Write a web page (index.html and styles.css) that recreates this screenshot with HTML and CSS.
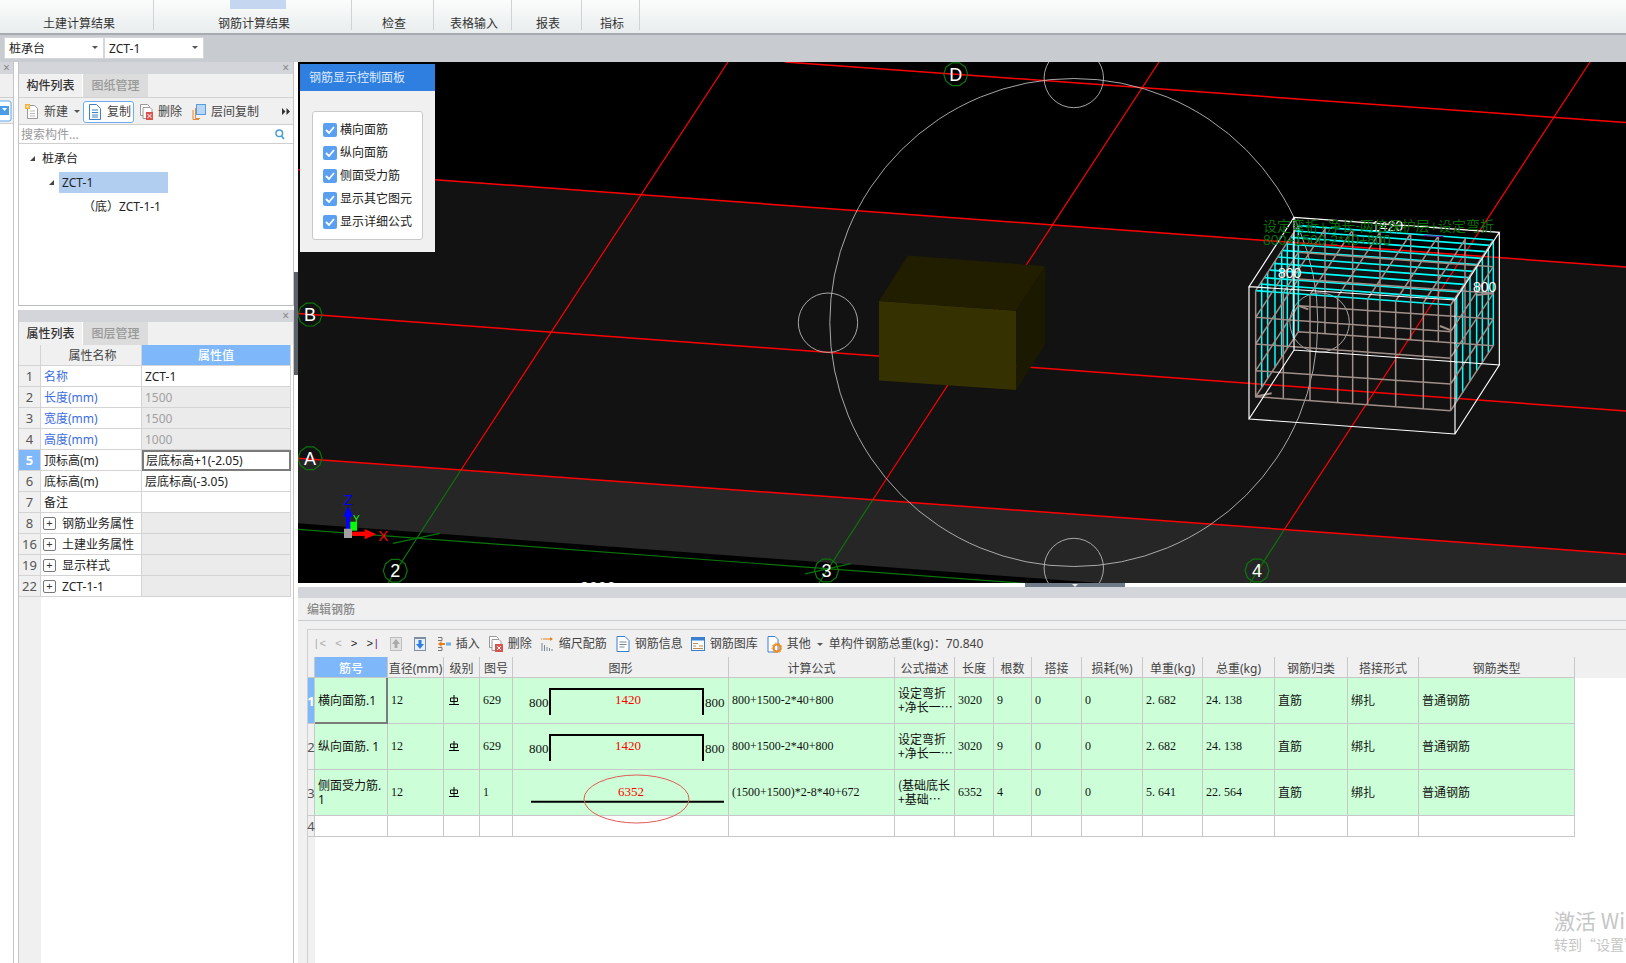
FILE: index.html
```html
<!DOCTYPE html>
<html lang="zh-CN">
<head>
<meta charset="utf-8">
<title>钢筋计算结果</title>
<link rel="stylesheet" href="styles.css">
</head>
<body>
<div class="app">
  <header class="ribbon">
    <div class="rb-group g1"><span>土建计算结果</span></div>
    <div class="rb-group g2"><i class="rb-mark"></i><span>钢筋计算结果</span></div>
    <div class="rb-group g3"><span>检查</span></div>
    <div class="rb-group g4"><span>表格输入</span></div>
    <div class="rb-group g5"><span>报表</span></div>
    <div class="rb-group g6"><span>指标</span></div>
  </header>
  <div class="combo-bar">
    <div class="combo">桩承台<i class="caret"></i></div>
    <div class="combo">ZCT-1<i class="caret"></i></div>
  </div>
  <main class="main">
    <aside class="rail">
      <div class="rail-head">×</div>
      <div class="rail-tabs"></div>
      <div class="rail-tool">
        <svg width="12" height="22" viewBox="0 0 12 22"><rect x="-6" y="1" width="17" height="20" rx="2" fill="#fff" stroke="#5ba6ee"/><rect x="-4" y="6" width="13" height="9" fill="#4a9be8"/><path d="M2 8h5l-2.500 3z" fill="#fff"/></svg>
      </div>
    </aside>
    <section class="left">
      <div class="panel comp">
        <div class="pn-head">×</div>
        <div class="tabs"><div class="tab on">构件列表</div><div class="tab">图纸管理</div></div>
        <div class="ptool">
          <span class="tool"><svg width="14" height="16" viewBox="0 0 14 16"><path d="M2.500 1.500h7l3 3v10h-10z" fill="#fff" stroke="#999"/><path d="M5 7h5M5 9.500h5M5 12h5" stroke="#bbb"/><rect x="0" y="0" width="5" height="5" fill="#f2b23c"/><rect x="1.500" y="1.500" width="2" height="2" fill="#fff3c8"/></svg>新建</span>
          <i class="caret tcaret"></i>
          <span class="tool tool-on"><svg width="12" height="16" viewBox="0 0 12 16"><path d="M.5 .5h7l4 4v11H.5z" fill="#fff" stroke="#3f7fc8"/><path d="M3 6h6M3 8.500h6M3 11h6M3 13h6" stroke="#3f7fc8"/></svg>复制</span>
          <span class="tool t-del"><svg width="13" height="16" viewBox="0 0 13 16"><path d="M.5 .5h7l2 2v9H.5z" fill="#fff" stroke="#999"/><path d="M3 3.500h7l2 2v9H3z" fill="#fff" stroke="#999"/><rect x="6" y="8" width="7" height="8" fill="#d9534f"/><path d="M7.500 10l4 4M11.500 10l-4 4" stroke="#fff"/></svg>删除</span>
          <span class="tool t-floor"><svg width="14" height="16" viewBox="0 0 14 16"><path d="M3.500 4v10.500H8M1 6v9.500h6" fill="none" stroke="#e08a3c"/><rect x="4.500" y=".5" width="9" height="10" fill="#b9d6f6" stroke="#5a9be0"/></svg>层间复制</span>
          <span class="more">
            <svg width="8" height="7" viewBox="0 0 8 7"><path d="M0 0l3.500 3.500L0 7zM4.500 0L8 3.500 4.500 7z" fill="#333"/></svg>
          </span>
        </div>
        <div class="psearch"><span>搜索构件...</span>
          <svg width="10" height="11" viewBox="0 0 10 11"><circle cx="4.300" cy="4.300" r="3.300" fill="none" stroke="#4a9bd8" stroke-width="1.500"/><path d="M6.500 7l2.500 3" stroke="#4a9bd8" stroke-width="1.800"/></svg>
        </div>
        <div class="tree">
          <div class="tr r1"><i class="tri"></i><span class="lb">桩承台</span></div>
          <div class="tr r2"><i class="tri"></i><span class="lb sel">ZCT-1</span></div>
          <div class="tr r3"><span class="lb">（底）ZCT-1-1</span></div>
        </div>
      </div>
      <div class="panel props">
        <div class="pn-head">×</div>
        <div class="tabs"><div class="tab on">属性列表</div><div class="tab">图层管理</div></div>
        <div class="pgrid">
          <div class="prow phead"><div class="pn"></div><div class="pk hd">属性名称</div><div class="pv hd hl">属性值</div></div>
          <div class="prow"><div class="pn">1</div><div class="pk blue">名称</div><div class="pv">ZCT-1</div></div>
          <div class="prow"><div class="pn">2</div><div class="pk blue">长度(mm)</div><div class="pv off">1500</div></div>
          <div class="prow"><div class="pn">3</div><div class="pk blue">宽度(mm)</div><div class="pv off">1500</div></div>
          <div class="prow"><div class="pn">4</div><div class="pk blue">高度(mm)</div><div class="pv off">1000</div></div>
          <div class="prow"><div class="pn cur">5</div><div class="pk">顶标高(m)</div><div class="pv edit">层底标高+1(-2.05)</div></div>
          <div class="prow"><div class="pn">6</div><div class="pk">底标高(m)</div><div class="pv">层底标高(-3.05)</div></div>
          <div class="prow"><div class="pn">7</div><div class="pk">备注</div><div class="pv"></div></div>
          <div class="prow"><div class="pn">8</div><div class="pk"><i class="plus">+</i>钢筋业务属性</div><div class="pv grp"></div></div>
          <div class="prow"><div class="pn">16</div><div class="pk"><i class="plus">+</i>土建业务属性</div><div class="pv grp"></div></div>
          <div class="prow"><div class="pn">19</div><div class="pk"><i class="plus">+</i>显示样式</div><div class="pv grp"></div></div>
          <div class="prow"><div class="pn">22</div><div class="pk"><i class="plus">+</i>ZCT-1-1</div><div class="pv grp"></div></div>
          <div class="pfill"></div>
        </div>
      </div>
    </section>
    <div class="splitter"><i class="split-thumb"></i></div>
    <section class="right">
      <div class="viewport">
        <svg class="scene" width="1328" height="521" viewBox="298 62 1328 521">
          <defs>
            <polygon id="ax" points="12,0 9.700,7.050 3.700,11.400 -3.700,11.400 -9.700,7.050 -12,0 -9.700,-7.050 -3.700,-11.400 3.700,-11.400 9.700,-7.050" fill="none" stroke="#0b740b" stroke-width="1.200"/>
          </defs>
          <rect x="298" y="62" width="1328" height="521" fill="#000"/>
          <polygon points="298,169.700 1626,266.900 1626,554.200 298,458.200" fill="#121212"/>
          <polygon points="298,458.200 1626,554.200 1626,583 1100,583 298,523.300" fill="#262626"/>
          <g stroke="#f00" fill="none">
            <path d="M785 62L1626 122.500M298 169.700L1626 266.900M298 313.500L1626 410.900M298 458.200L1626 554.200" stroke-width="1.500"/>
            <path d="M728 62L461 470M1159 62L873 499.500M1590 62L1284 530" stroke-width="1.200"/>
          </g>
          <g stroke="#0b740b" fill="none" stroke-width="1.200">
            <path d="M461 470L388 583M873 499.500L819 583M1284 530L1250 583"/>
            <path d="M298 529.300L1100 589"/>
            <path d="M393 543.300L439.700 533.300M805 573.900L850.600 563.700"/>
          </g>
          <polygon points="879,301 1016.200,310.800 1016.200,390 879,380.500" fill="#363100"/>
          <polygon points="879,301 907.800,255.400 1045.400,266.200 1016.200,310.800" fill="#211e00"/>
          <polygon points="1016.200,310.800 1045.400,266.200 1045.400,344 1016.200,390" fill="#1b1a00"/>
          <g fill="none" stroke="#b8b8b8" stroke-width=".9">
            <circle cx="1073.800" cy="322.500" r="244"/>
            <circle cx="828" cy="322.700" r="29.700"/>
            <circle cx="1073.800" cy="78" r="29.700"/>
            <circle cx="1073.800" cy="568" r="29.700"/>
            <circle cx="1319.600" cy="322.500" r="29.700"/>
          </g>
          <g transform="translate(1220 200) scale(.33333)" fill="none">
            <path stroke="#0ff" stroke-width="4.500" d="M125 244V560M143 217V535M165 183V500M185 153V470M202 127V445M220 100V415M235 77V395M710 287V603M728 260V578M750 226V543M770 196V513M787 170V488M805 143V458M820 120V437"/>
            <path stroke="#0ff" stroke-width="5" d="M107 272L692 315M120 252L705 296M133 233L718 276M148 210L733 253M161 190L746 233M174 171L759 214M186 151L771 194M199 132L784 175M212 112L797 155M225 93L810 136M235 77L820 120"/>
            <path stroke="#a08f88" stroke-width="4.500" d="M107 272V590M190 278V596M270 284V602M353 290V608M398 293V611M443 297V615M527 303V621M610 309V627M692 315V632M107 352L692 395M107 432L692 475M107 512L692 552M107 590L692 632M692 315L820 120M692 395L820 200M692 472L820 280M692 552L820 357M692 632L820 437M107 272L235 77M107 352L235 157M107 432L235 237M107 512L235 317M107 590L235 395M235 157L820 200M235 237L820 280M235 317L820 357M235 395L820 437M315 83V401M398 89V407M480 95V413M572 102V420M655 108V426M735 114V432M190 278L318 83M270 284L398 89M353 290L481 95M443 297L571 102M527 303L655 108M610 309L738 114"/>
            <path stroke="#a08f88" stroke-width="6" d="M238 318L265 328M660 378L695 392M105 590L155 580M770 285L820 280"/>
            <path stroke="#fff" stroke-width="3.500" d="M87 260L705 300L838 97L222 52ZM87 657L705 702L838 495L222 450ZM87 260V657M705 300V702M838 97V495M222 52V450"/>
            <path stroke="#5a1a9a" stroke-width="4" d="M610 107L670 110"/>
          </g>
          <text class="t-dim" x="1372" y="231">1420</text>
          <text class="t-green" x="1263" y="231">设定弯折+净长-两倍保护层+设定弯折</text>
          <text class="t-green" x="1263" y="245">800+1500-2*40+800</text>
          <text class="t-dim" x="1278" y="278">800</text>
          <text class="t-dim" x="1473" y="292">800</text>
          <g class="axis">
            <use href="#ax" x="310" y="458.300"/><text x="310" y="465">A</text>
            <use href="#ax" x="310" y="314.600"/><text x="310" y="321">B</text>
            <use href="#ax" x="955.700" y="74.200"/><text x="955.700" y="80.500">D</text>
            <use href="#ax" x="395.300" y="570.700"/><text x="395.300" y="577">2</text>
            <use href="#ax" x="826.500" y="570.500"/><text x="826.500" y="577">3</text>
            <use href="#ax" x="1257" y="570.500"/><text x="1257" y="577">4</text>
          </g>
          <text class="t-dim big" x="580" y="594">3000</text>
          <g>
            <rect x="346" y="516.700" width="4" height="13.300" fill="#00f"/>
            <polygon points="343.300,516.700 348,506 353.300,516.700" fill="#00f"/>
            <rect x="350.300" y="521.700" width="6.700" height="9" fill="#0f0"/>
            <rect x="351" y="531.700" width="15" height="4.300" fill="#f00"/>
            <polygon points="364.700,529 376.300,534.300 364.700,539.300" fill="#f00"/>
            <rect x="344" y="528.700" width="8" height="9.300" fill="#a0a0a0"/>
            <text class="giz gz" x="348" y="505">Z</text>
            <text class="giz gy" x="356.300" y="523">Y</text>
            <text class="giz gx" x="383.300" y="541">X</text>
          </g>
        </svg>
        <div class="ctrl">
          <div class="ctrl-title">钢筋显示控制面板</div>
          <div class="ctrl-body">
            <div class="ctrl-box">
              <label class="chk"><i class="cb"><svg width="10" height="8" viewBox="0 0 10 8"><path d="M1 4l3 3 5-6" fill="none" stroke="#fff" stroke-width="1.800"/></svg></i>横向面筋</label>
              <label class="chk"><i class="cb"><svg width="10" height="8" viewBox="0 0 10 8"><path d="M1 4l3 3 5-6" fill="none" stroke="#fff" stroke-width="1.800"/></svg></i>纵向面筋</label>
              <label class="chk"><i class="cb"><svg width="10" height="8" viewBox="0 0 10 8"><path d="M1 4l3 3 5-6" fill="none" stroke="#fff" stroke-width="1.800"/></svg></i>侧面受力筋</label>
              <label class="chk"><i class="cb"><svg width="10" height="8" viewBox="0 0 10 8"><path d="M1 4l3 3 5-6" fill="none" stroke="#fff" stroke-width="1.800"/></svg></i>显示其它图元</label>
              <label class="chk"><i class="cb"><svg width="10" height="8" viewBox="0 0 10 8"><path d="M1 4l3 3 5-6" fill="none" stroke="#fff" stroke-width="1.800"/></svg></i>显示详细公式</label>
            </div>
          </div>
        </div>
      </div>
      <div class="hsplit"><i class="hthumb"></i></div>
      <div class="editor">
        <div class="ed-head"></div>
        <div class="ed-title">编辑钢筋</div>
        <div class="ed-body">
          <div class="ed-inner">
            <div class="etool">
              <span class="nav n1">|&lt;</span><span class="nav n2">&lt;</span><span class="nav n3">&gt;</span><span class="nav n4">&gt;<b>|</b></span>
              <svg class="e-up" width="12" height="14" viewBox="0 0 12 14"><rect width="12" height="14" fill="#bdbdbd"/><rect x="1" y="1" width="10" height="12" fill="#e4e4e4"/><path d="M6 2L2 7h2.500v4h3V7H10z" fill="#aaa"/></svg>
              <svg class="e-down" width="12" height="14" viewBox="0 0 12 14"><rect width="12" height="14" fill="#7f8ea0"/><rect x="1" y="2" width="10" height="11" fill="#e8eef6"/><path d="M6 12L2 7h2.500V3h3v4H10z" fill="#2f7fe0"/></svg>
              <span class="tool e-ins"><svg width="14" height="16" viewBox="0 0 14 16"><path d="M1 1.500h4M1 14.500h4M5 1.500v3H1M5 14.500v-3H1" fill="none" stroke="#777"/><path d="M1 8l3.500-3v2H8v2H4.500v2z" fill="#e8801a"/><rect x="9" y="6.500" width="5" height="3" fill="#6ab0ea"/></svg>插入</span>
              <span class="tool"><svg width="14" height="16" viewBox="0 0 14 16"><path d="M.5 .5h7l2 2v9H.5z" fill="#fff" stroke="#999"/><path d="M3 3.500h7l2 2v9H3z" fill="#fff" stroke="#999"/><rect x="6" y="8" width="8" height="8" fill="#d9534f"/><path d="M8 10l4 4M12 10l-4 4" stroke="#fff"/></svg>删除</span>
              <span class="tool"><svg width="13" height="16" viewBox="0 0 13 16"><path d="M0 3h1M2 3h9" stroke="#e8801a"/><path d="M9 1l3 2-3 2z" fill="#e8801a"/><path d="M1 15V7M3.500 15V9M6 15v-4M8.500 15v-3M11 15v-2" stroke="#7a8794"/></svg>缩尺配筋</span>
              <span class="tool"><svg width="14" height="16" viewBox="0 0 14 16"><path d="M1 .5h8l4 4v11H1z" fill="#fff" stroke="#3a7fd0"/><path d="M3.500 6h7M3.500 8.500h7M3.500 11h5" stroke="#7a8794"/></svg>钢筋信息</span>
              <span class="tool e-lib"><svg width="14" height="14" viewBox="0 0 14 14"><rect x=".5" y=".5" width="13" height="13" fill="#fff" stroke="#3a7fd0"/><rect width="14" height="3.500" fill="#3a7fd0"/><path d="M2 6.500h5M2 9h3M8 9h4M2 11.500h10" stroke="#c08a50"/></svg>钢筋图库</span>
              <span class="tool e-oth"><svg width="15" height="17" viewBox="0 0 15 17"><path d="M1 .5h7l3 3V16H1z" fill="#fff" stroke="#3a7fd0"/><circle cx="10" cy="12" r="3.500" fill="none" stroke="#ee8a20" stroke-width="2.200"/><circle cx="10" cy="12" r="5" fill="none" stroke="#ee8a20" stroke-dasharray="1.500 2"/></svg>其他</span>
              <i class="caret ecaret"></i>
              <span class="etotal">单构件钢筋总重(kg)：70.840</span>
            </div>
            <div class="rgrid">
              <div class="rrow rhead">
                <div class="c num"></div><div class="c hl">筋号</div><div class="c">直径(mm)</div><div class="c">级别</div><div class="c">图号</div><div class="c">图形</div><div class="c">计算公式</div><div class="c">公式描述</div><div class="c">长度</div><div class="c">根数</div><div class="c">搭接</div><div class="c">损耗(%)</div><div class="c">单重(kg)</div><div class="c">总重(kg)</div><div class="c">钢筋归类</div><div class="c">搭接形式</div><div class="c">钢筋类型</div>
              </div>
              <div class="rrow rdata">
                <div class="c num cur">1</div><div class="c ui focus">横向面筋.1</div><div class="c">12</div><div class="c grade"><svg width="10" height="10" viewBox="0 0 10 10"><path d="M1.500 3h7v3.500h-7zM5 0v9M0 9.500h10" fill="none" stroke="#000"/></svg></div><div class="c">629</div>
                <div class="c shape"><svg width="215" height="45" viewBox="0 0 215 45"><path d="M37 37V11H190V37" fill="none" stroke="#000" stroke-width="2"/><text class="s-n" x="16" y="29">800</text><text class="s-n" x="192" y="29">800</text><text class="s-r" x="115" y="26">1420</text></svg></div>
                <div class="c">800+1500-2*40+800</div><div class="c desc">设定弯折<br>+净长一…</div><div class="c">3020</div><div class="c">9</div><div class="c">0</div><div class="c">0</div><div class="c">2. 682</div><div class="c">24. 138</div><div class="c ui">直筋</div><div class="c ui">绑扎</div><div class="c ui">普通钢筋</div>
              </div>
              <div class="rrow rdata">
                <div class="c num">2</div><div class="c ui">纵向面筋. 1</div><div class="c">12</div><div class="c grade"><svg width="10" height="10" viewBox="0 0 10 10"><path d="M1.500 3h7v3.500h-7zM5 0v9M0 9.500h10" fill="none" stroke="#000"/></svg></div><div class="c">629</div>
                <div class="c shape"><svg width="215" height="45" viewBox="0 0 215 45"><path d="M37 37V11H190V37" fill="none" stroke="#000" stroke-width="2"/><text class="s-n" x="16" y="29">800</text><text class="s-n" x="192" y="29">800</text><text class="s-r" x="115" y="26">1420</text></svg></div>
                <div class="c">800+1500-2*40+800</div><div class="c desc">设定弯折<br>+净长一…</div><div class="c">3020</div><div class="c">9</div><div class="c">0</div><div class="c">0</div><div class="c">2. 682</div><div class="c">24. 138</div><div class="c ui">直筋</div><div class="c ui">绑扎</div><div class="c ui">普通钢筋</div>
              </div>
              <div class="rrow rdata">
                <div class="c num">3</div><div class="c ui">侧面受力筋.<br>1</div><div class="c">12</div><div class="c grade"><svg width="10" height="10" viewBox="0 0 10 10"><path d="M1.500 3h7v3.500h-7zM5 0v9M0 9.500h10" fill="none" stroke="#000"/></svg></div><div class="c">1</div>
                <div class="c shape"><svg width="215" height="45" viewBox="0 0 215 45"><path d="M18 31.700H211" stroke="#000" stroke-width="2"/><ellipse cx="123.500" cy="29" rx="52.500" ry="24" fill="none" stroke="#e25a5a"/><text class="s-r" x="118" y="26">6352</text></svg></div>
                <div class="c">(1500+1500)*2-8*40+672</div><div class="c desc">(基础底长<br>+基础…</div><div class="c">6352</div><div class="c">4</div><div class="c">0</div><div class="c">0</div><div class="c">5. 641</div><div class="c">22. 564</div><div class="c ui">直筋</div><div class="c ui">绑扎</div><div class="c ui">普通钢筋</div>
              </div>
              <div class="rrow rempty">
                <div class="c num">4</div><div class="c"></div><div class="c"></div><div class="c"></div><div class="c"></div><div class="c"></div><div class="c"></div><div class="c"></div><div class="c"></div><div class="c"></div><div class="c"></div><div class="c"></div><div class="c"></div><div class="c"></div><div class="c"></div><div class="c"></div><div class="c"></div>
              </div>
              <div class="rfill"></div>
            </div>
          </div>
        </div>
      </div>
    </section>
  </main>
  <div class="watermark"><div class="wm1">激活 Windows</div><div class="wm2">转到“设置”以激活 Windows。</div></div>
</div>
</body>
</html>
```
FILE: styles.css
```css
* { box-sizing: border-box; }
html, body { margin: 0; padding: 0; }
body { width: 1626px; height: 963px; overflow: hidden; background: #fff; font: 12px/16px "Noto Sans", "Noto Sans CJK SC", sans-serif; color: #222; }
i { font-style: normal; }
.app { position: relative; width: 1626px; height: 963px; overflow: hidden; display: flex; flex-direction: column; }

/* ribbon */
.ribbon { height: 35px; display: flex; padding: 0 0 3px 2px; background: linear-gradient(#fbfcfc, #e9eded); border-bottom: 2px solid #a8acb2; }
.rb-group { display: flex; flex-direction: column; justify-content: flex-end; align-items: center; padding-left: 3px; border-right: 1px solid #d0d3d6; position: relative; color: #333; }
.g1 { width: 152px; } .g2 { width: 198px; } .g3 { width: 82px; } .g4 { width: 78px; } .g5 { width: 70px; } .g6 { width: 58px; }
.rb-group span { line-height: 16px; margin-bottom: -2px; }
.g2 { justify-content: space-between; align-items: stretch; text-align: center; }
.rb-mark { display: block; width: 56px; height: 9px; margin-left: 73px; background: #c5d7f0; }

/* combo */
.combo-bar { height: 27px; background: #c8ccd1; display: flex; padding: 2px 0 0 4px; align-items: flex-start; }
.combo { width: 100px; height: 22px; background: #fff; border: 1px solid #d4d6d9; padding-left: 4px; line-height: 22px; position: relative; }
.caret { display: block; width: 0; height: 0; border: 3px solid transparent; border-top: 3px solid #555; border-bottom: 0; }
.combo .caret { position: absolute; right: 5px; top: 8px; }

/* main */
.main { flex: 1; display: flex; min-height: 0; }
.rail { width: 14px; border-right: 1px solid #c4c4c4; flex: none; }
.rail-head { height: 12px; background: #d3d5da; font-size: 12px; line-height: 12px; color: #888; text-align: center; }
.rail-tabs { height: 23px; background: #f0f0f0; }
.rail-tool { height: 27px; background: #f0f0f0; border-top: 1px solid #cfcfcf; border-bottom: 1px solid #cfcfcf; display: flex; align-items: center; }
.left { width: 280px; flex: none; padding-left: 4px; display: flex; flex-direction: column; }
.panel { border-left: 1px solid #c4c4c4; border-right: 1px solid #c4c4c4; display: flex; flex-direction: column; }
.comp { height: 244px; border-bottom: 1px solid #b9bcc0; }
.props { margin-top: 4px; flex: 1; min-height: 0; }
.pn-head { height: 12px; background: #d3d5da; text-align: right; padding-right: 4px; font-size: 12px; line-height: 12px; color: #888; flex: none; }
.tabs { height: 23px; display: flex; background: #f0f0f0; flex: none; }
.tab { width: 65px; text-align: center; line-height: 24px; background: #dcdcdc; color: #999; font-weight: 500; }
.tab.on { width: 64px; background: #f0f0f0; color: #333; border-right: 1px solid #fff; }
.ptool { height: 27px; flex: none; display: flex; align-items: center; background: #f0f0f0; border-top: 1px solid #d2d2d2; padding: 1px 0 0 6px; color: #444; }
.tool { display: inline-flex; align-items: center; gap: 5px; flex: none; }
.tcaret { margin-left: 6px; }
.tool-on { margin-left: 3px; width: 51px; height: 22px; padding-left: 5px; gap: 6px; background: #fff; border: 1px solid #6eaef0; border-radius: 3px; }
.t-del { margin-left: 6px; }
.t-floor { margin-left: 10px; }
.more { margin-left: auto; padding-right: 3px; display: flex; }
.psearch { height: 20px; flex: none; display: flex; align-items: center; justify-content: space-between; padding: 1px 8px 0 2px; border-top: 1px solid #cfcfcf; border-bottom: 1px solid #cfcfcf; color: #999; }
.tree { flex: 1; padding-top: 4px; }
.tr { height: 24px; display: flex; align-items: flex-start; }
.lb { display: block; height: 21px; line-height: 21px; }
.tri { display: block; width: 0; height: 0; margin-top: 8px; border-left: 5px solid transparent; border-bottom: 5px solid #444; }
.r1 { padding-left: 11px; } .r1 .lb { margin-left: 7px; }
.r2 { padding-left: 30px; } .r2 .lb { margin-left: 5px; }
.sel { width: 109px; background: #b1cdf0; padding-left: 3px; }
.r3 { padding-left: 64px; }

/* property grid */
.pgrid { flex: 1; display: flex; flex-direction: column; min-height: 0; }
.prow { display: grid; grid-template-columns: 22px 101px 149px; height: 21px; flex: none; }
.prow > div { border-right: 1px solid #d4d4d4; border-bottom: 1px solid #d4d4d4; line-height: 21px; white-space: nowrap; overflow: hidden; }
.pn { background: #f0f0f0; text-align: center; color: #555; font-size: 13px; }
.pn.cur { background: #7fb8fa; color: #fff; font-weight: 700; }
.pk { padding: 1px 0 0 3px; background: #fff; display: flex; align-items: center; color: #222; }
.pk.hd { justify-content: center; background: #f0f0f0; color: #444; }
.pk.blue { color: #3c6ee0; }
.pv { padding-left: 3px; background: #fff; }
.pv.hd { text-align: center; }
.pv.hl { background: #7fb8fa; color: #fff; font-weight: 500; padding: 0; }
.pv.off { background: #ebebeb; color: #a0a0a0; }
.pv.grp { background: #ebebeb; }
.prow > .pv.edit { border: 2px solid #7b7b7b; line-height: 18px; padding-left: 2px; }
.plus { flex: none; width: 13px; height: 13px; margin: 0 6px 0 -1px; border: 1px solid #777; border-radius: 2px; text-align: center; line-height: 10px; font-size: 11px; color: #333; }
.pfill { width: 22px; flex: 1; background: #f0f0f0; }

.splitter { width: 4px; flex: none; background: #fff; }
.split-thumb { display: block; width: 4px; height: 103px; margin-top: 210px; background: #5c6068; }

/* right column */
.right { flex: 1; min-width: 0; display: flex; flex-direction: column; }
.viewport { position: relative; height: 521px; flex: none; background: #000; }
.scene { display: block; }
.t-green { font-size: 14px; fill: #0a6e0a; font-family: "Liberation Sans", "Noto Sans CJK SC", sans-serif; }
.t-dim { font-size: 14px; fill: #fff; font-family: "Liberation Sans", sans-serif; }
.t-dim.big { font-size: 16px; }
.axis text { font: 18px "Liberation Sans", sans-serif; fill: #fff; text-anchor: middle; }
.giz { font-family: "Liberation Sans", sans-serif; text-anchor: middle; }
.gz { font-size: 15px; fill: #00f; }
.gy { font-size: 10px; fill: #0f0; }
.gx { font-size: 15px; fill: #f00; }

.ctrl { position: absolute; left: 2px; top: 2px; width: 135px; height: 188px; background: #f0f0f0; display: flex; flex-direction: column; }
.ctrl-title { height: 27px; background: #2e7fe0; color: #dfeaff; line-height: 27px; padding-left: 9px; }
.ctrl-body { padding: 20px 12px 0; }
.ctrl-box { height: 129px; background: #fff; border: 1px solid #c9c9c9; border-radius: 3px; padding: 6px 0 0 10px; }
.chk { display: flex; align-items: center; gap: 3px; height: 23px; }
.cb { width: 14px; height: 14px; background: #5ba0f0; border-radius: 2px; display: flex; align-items: center; justify-content: center; }

.hsplit { height: 4px; background: #fff; flex: none; }
.hthumb { display: flex; justify-content: center; width: 100px; height: 4px; margin-left: 727px; background: #6e7a88; }
.hthumb::after { content: ""; width: 0; height: 0; margin-top: 1px; border: 3px solid transparent; border-top: 3px solid #e8e8e8; border-bottom: 0; }
.editor { flex: 1; display: flex; flex-direction: column; min-height: 0; }
.ed-head { height: 11px; background: #d3d5da; flex: none; }
.ed-title { height: 23px; background: #f0f0f0; border-bottom: 1px solid #c9ccd1; color: #8a8a8a; line-height: 24px; padding-left: 9px; font-weight: 500; flex: none; }
.ed-body { flex: 1; min-height: 0; background: #f0f0f0; padding: 8px 0 0 9px; display: flex; }
.ed-inner { flex: 1; min-width: 0; border-left: 1px solid #cfcfcf; border-top: 1px solid #cfcfcf; display: flex; flex-direction: column; background: #fff; }
.etool { height: 27px; flex: none; background: #f0f0f0; display: flex; align-items: center; color: #444; padding: 1px 0 0 5px; }
.etool .tool { margin-left: 9px; }
.etool .e-ins { margin-left: 11px; }
.etool .e-lib { margin-left: 8px; }
.nav { font-family: "Liberation Mono", monospace; font-size: 11px; color: #aaa; flex: none; }
.n2 { margin-left: 9px; }
.n3 { margin-left: 9px; color: #222; }
.n4 { margin-left: 9px; color: #222; }
.n4 b { color: #7a2a7a; font-weight: 400; }
.e-up { margin-left: 10px; flex: none; }
.e-down { margin-left: 12px; flex: none; }
.ecaret { margin-left: 6px; margin-right: 6px; }
.etotal { white-space: nowrap; }

/* rebar grid */
.rgrid { flex: 1; display: flex; flex-direction: column; min-height: 0; }
.rrow { display: grid; grid-template-columns: 7px 73px 56px 36px 33px 216px 166px 60px 39px 38px 50px 61px 60px 72px 73px 71px 156px; flex: none; }
.c { border-right: 1px solid #c8c8c8; border-bottom: 1px solid #c8c8c8; display: flex; align-items: center; overflow: hidden; white-space: nowrap; min-width: 0; }
.rhead { height: 21px; background: #f0f0f0; }
.rhead .c { justify-content: center; color: #444; padding-top: 3px; }
.rhead .hl { background: #7fb8fa; color: #fff; font-weight: 500; }
.rdata { height: 46px; font-family: "Liberation Serif", "Noto Sans CJK SC", serif; }
.rdata .c { background: #ccffd7; padding: 0 0 2px 3px; line-height: 14px; color: #111; }
.rempty { height: 21px; }
.c.num { background: #f0f0f0; justify-content: center; font: 13px "Noto Sans", sans-serif; color: #555; overflow: visible; }
.rdata .c.num { background: #f0f0f0; padding: 0; }
.rdata .c.num.cur { background: #7fb8fa; color: #fff; font-weight: 700; }
.rdata .c.ui { font-family: "Noto Sans", "Noto Sans CJK SC", sans-serif; white-space: normal; padding: 0 0 0 3px; }
.rdata .c.ui:nth-child(2) { padding-top: 1px; }
.rdata .c.desc { font-family: "Noto Sans CJK SC", sans-serif; white-space: normal; }
.rdata .c.focus { border-right: 2px solid #7b7b7b; border-bottom: 2px solid #7b7b7b; }
.rdata .c.grade { padding-left: 5px; }
.rdata .c.shape { padding: 0; overflow: visible; position: relative; z-index: 1; display: block; }
.shape svg { display: block; overflow: visible; }
.s-n { font: 13px "Liberation Serif", serif; fill: #111; }
.s-r { font: 13px "Liberation Serif", serif; fill: #f00; text-anchor: middle; }
.rfill { flex: 1; width: 7px; background: #f0f0f0; }

.watermark { position: absolute; left: 1554px; top: 907px; white-space: nowrap; color: #c6c6c6; font-family: "Noto Sans CJK SC", sans-serif; }
.wm1 { font-size: 21px; line-height: 26px; }
.wm2 { font-size: 14px; line-height: 22px; }
```
